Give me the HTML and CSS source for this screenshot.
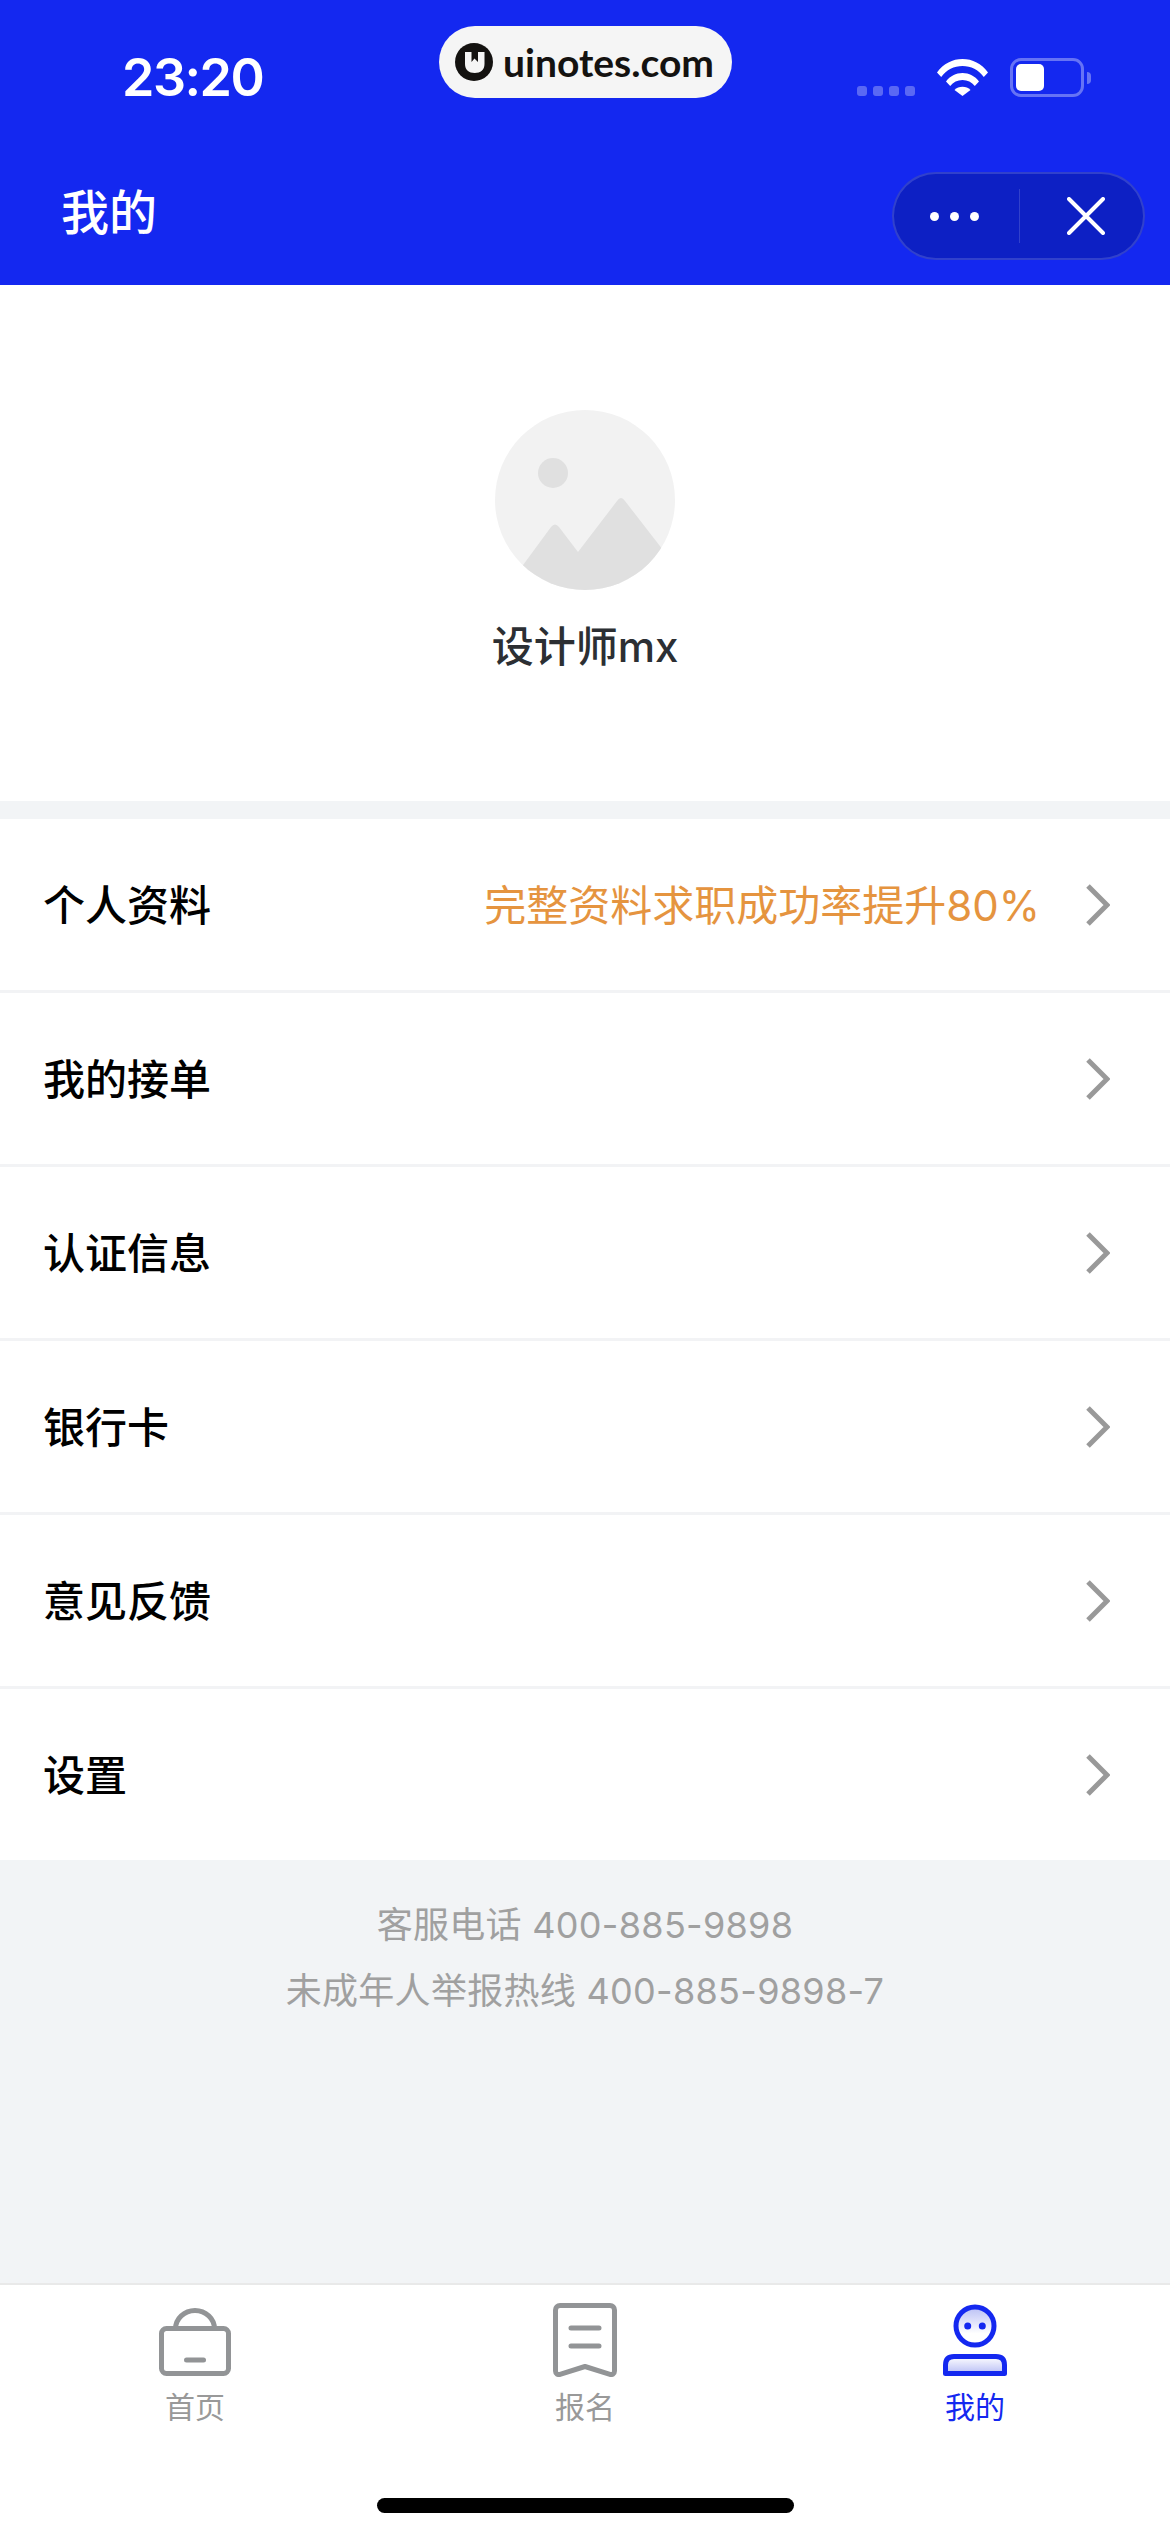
FILE: index.html
```html
<!DOCTYPE html>
<html lang="zh-CN">
<head>
    <meta charset="UTF-8">
    <meta name="viewport" content="width=device-width, initial-scale=1.0">
    <title>我的</title>
    <link rel="stylesheet" href="styles.css">
</head>
<body>
    <div class="page">
        <div class="header">
            <div class="status-bar">
                <span class="time">23:20</span>
                <div class="status-icons">
                    <div class="signal"><i></i><i></i><i></i><i></i></div>
                    <svg class="wifi" width="51" height="37" viewBox="0 0 51 37">
                        <path d="M0 13.500C6.500 4.500 15.500 0 25.500 0S44.500 4.500 51 13.500L46.800 18C41.500 10.800 34 7 25.500 7S9.500 10.800 4.200 18Z" fill="#fff"/>
                        <path d="M9 22.500C13 17 19 14 25.500 14S38 17 42 22.500L37.800 27C34.800 23 30.500 21 25.500 21S16.200 23 13.200 27Z" fill="#fff"/>
                        <path d="M17.500 31C19.500 29 22.500 27.800 25.500 27.800S31.500 29 33.500 31L25.500 37Z" fill="#fff"/>
                    </svg>
                    <div class="battery">
                        <div class="battery-body"><div class="battery-level"></div></div>
                        <div class="battery-nub"></div>
                    </div>
                </div>
            </div>
            <div class="nav-bar">
                <span class="nav-title">我的</span>
                <div class="capsule">
                    <div class="capsule-more"><i></i><i></i><i></i></div>
                    <div class="capsule-close">
                        <svg width="38" height="38" viewBox="0 0 38 38">
                            <path d="M2 2L36 36M36 2L2 36" stroke="#fff" stroke-width="4" stroke-linecap="round" fill="none"/>
                        </svg>
                    </div>
                </div>
            </div>
        </div>

        <!-- watermark on top of the status bar -->
        <div class="watermark">
            <svg width="38" height="38" viewBox="0 0 38 38">
                <circle cx="19" cy="19" r="19" fill="#141210"/>
                <path d="M10 9H16.500V19L19.500 15.500L23 19V9H29.500V21C29.500 27 25.500 30 19.750 30S10 27 10 21Z" fill="#f5f5f5"/>
            </svg>
            <span>uinotes.com</span>
        </div>

        <div class="profile">
            <svg class="avatar" width="180" height="180" viewBox="0 0 180 180">
                <defs><clipPath id="avatarClip"><circle cx="90" cy="90" r="90"/></clipPath></defs>
                <circle cx="90" cy="90" r="90" fill="#f2f2f2"/>
                <circle cx="58" cy="63" r="15" fill="#e0e0e0"/>
                <path clip-path="url(#avatarClip)" d="M20 166L56 117Q60 112 64 117L83 142L122 91Q126 85 130 91L175 149V180H20Z" fill="#e0e0e0"/>
            </svg>
            <div class="profile-name">设计师mx</div>
        </div>

        <div class="menu">
            <div class="menu-row">
                <span class="menu-label">个人资料</span>
                <span class="menu-hint">完整资料求职成功率提升80%</span>
                <svg class="chevron" width="24" height="42" viewBox="0 0 24 42"><path d="M2 2L21 21L2 40" stroke="#999" stroke-width="5" fill="none"/></svg>
            </div>
            <div class="menu-row">
                <span class="menu-label">我的接单</span>
                <svg class="chevron" width="24" height="42" viewBox="0 0 24 42"><path d="M2 2L21 21L2 40" stroke="#999" stroke-width="5" fill="none"/></svg>
            </div>
            <div class="menu-row">
                <span class="menu-label">认证信息</span>
                <svg class="chevron" width="24" height="42" viewBox="0 0 24 42"><path d="M2 2L21 21L2 40" stroke="#999" stroke-width="5" fill="none"/></svg>
            </div>
            <div class="menu-row">
                <span class="menu-label">银行卡</span>
                <svg class="chevron" width="24" height="42" viewBox="0 0 24 42"><path d="M2 2L21 21L2 40" stroke="#999" stroke-width="5" fill="none"/></svg>
            </div>
            <div class="menu-row">
                <span class="menu-label">意见反馈</span>
                <svg class="chevron" width="24" height="42" viewBox="0 0 24 42"><path d="M2 2L21 21L2 40" stroke="#999" stroke-width="5" fill="none"/></svg>
            </div>
            <div class="menu-row">
                <span class="menu-label">设置</span>
                <svg class="chevron" width="24" height="42" viewBox="0 0 24 42"><path d="M2 2L21 21L2 40" stroke="#999" stroke-width="5" fill="none"/></svg>
            </div>
        </div>

        <div class="service">
            <p>客服电话 400-885-9898</p>
            <p>未成年人举报热线 400-885-9898-7</p>
        </div>

        <div class="tab-bar">
            <div class="tabs">
                <div class="tab">
                    <svg width="72" height="74" viewBox="0 0 72 74">
                        <path d="M16.500 26A19.500 18.500 0 0 1 55.500 26" stroke="#929496" stroke-width="5" fill="none"/>
                        <rect x="2.500" y="25.500" width="67" height="45" rx="5" stroke="#929496" stroke-width="5" fill="none"/>
                        <path d="M27.500 57H44.500" stroke="#929496" stroke-width="5" stroke-linecap="round"/>
                    </svg>
                    <span>首页</span>
                </div>
                <div class="tab">
                    <svg width="64" height="74" viewBox="0 0 64 74">
                        <path d="M2.500 7C2.500 4.500 4.500 2.500 7 2.500H57C59.500 2.500 61.500 4.500 61.500 7V68C61.500 71 59 72 57 71.300L32 63.500L7 71.300C5 72 2.500 71 2.500 68Z" stroke="#929496" stroke-width="5" stroke-linejoin="round" fill="none"/>
                        <path d="M18 25H46M18 43H46" stroke="#929496" stroke-width="5" stroke-linecap="round"/>
                    </svg>
                    <span>报名</span>
                </div>
                <div class="tab tab-active">
                    <svg width="64" height="74" viewBox="0 0 64 74">
                        <defs>
                            <linearGradient id="headFill" x1="0" y1="0" x2="0" y2="1">
                                <stop offset="0" stop-color="#b9bff5"/>
                                <stop offset="0.700" stop-color="#fff"/>
                            </linearGradient>
                            <linearGradient id="bodyFill" x1="0" y1="0" x2="0" y2="1">
                                <stop offset="0" stop-color="#fff"/>
                                <stop offset="1" stop-color="#b9bff5"/>
                            </linearGradient>
                        </defs>
                        <circle cx="32" cy="23" r="19" fill="url(#headFill)" stroke="#1428f0" stroke-width="5"/>
                        <circle cx="24.700" cy="23" r="3.500" fill="#1428f0"/>
                        <circle cx="39.300" cy="23" r="3.500" fill="#1428f0"/>
                        <path d="M2.500 70.500V62C2.500 56 6 53.500 11 53.500H53C58 53.500 61.500 56 61.500 62V70.500Z" fill="url(#bodyFill)" stroke="#1428f0" stroke-width="5" stroke-linejoin="round"/>
                    </svg>
                    <span>我的</span>
                </div>
            </div>
            <div class="home-indicator"></div>
        </div>
    </div>
</body>
</html>
```

FILE: styles.css
```css
* {
    box-sizing: border-box;
}

body {
    margin: 0;
    background-color: #f2f4f6;
    font-family: Inter, "Noto Sans CJK SC", sans-serif;
}

.page {
    position: relative;
    display: flex;
    flex-direction: column;
    width: 1170px;
    height: 2532px;
    overflow: hidden;
}

/* header */
.header {
    height: 285px;
    background-color: #1428f0;
    color: #fff;
}

.status-bar {
    display: flex;
    justify-content: space-between;
    height: 172px;
    padding: 50px 79px 0 122px;
}

.time {
    font-size: 52px;
    line-height: 56px;
    font-weight: 600;
    letter-spacing: -1.500px;
}

.status-icons {
    display: flex;
    align-items: flex-start;
    padding-top: 8px;
}

.signal {
    display: flex;
    gap: 6px;
    margin-top: 28px;
    margin-right: 22px;
}

.signal i {
    width: 10px;
    height: 10px;
    border-radius: 3px;
    background-color: rgba(255, 255, 255, 0.3);
}

.wifi {
    margin-top: 1px;
    margin-right: 22px;
}

.battery {
    display: flex;
    align-items: center;
}

.battery-body {
    width: 74px;
    height: 39px;
    padding: 3px;
    border: 3px solid rgba(255, 255, 255, 0.35);
    border-radius: 11px;
}

.battery-level {
    width: 28px;
    height: 27px;
    border-radius: 5px;
    background-color: #fff;
}

.battery-nub {
    width: 4px;
    height: 12px;
    margin-left: 3px;
    border-radius: 0 6px 6px 0;
    background-color: rgba(255, 255, 255, 0.35);
}

.nav-bar {
    display: flex;
    justify-content: space-between;
    align-items: center;
    height: 88px;
    padding: 0 25px 0 61px;
}

.nav-title {
    margin-bottom: 14px;
    font-size: 48px;
    font-weight: 500;
}

.capsule {
    display: flex;
    align-items: center;
    width: 253px;
    height: 88px;
    border: 2px solid rgba(255, 255, 255, 0.15);
    border-radius: 44px;
    background-color: #0d20c4;
}

.capsule-more {
    display: flex;
    justify-content: center;
    align-items: center;
    gap: 11px;
    width: 126px;
    height: 54px;
    padding-right: 4px;
    border-right: 1px solid rgba(255, 255, 255, 0.15);
}

.capsule-more i {
    width: 9px;
    height: 9px;
    border-radius: 50%;
    background-color: #fff;
}

.capsule-close {
    display: flex;
    flex: 1;
    justify-content: center;
    padding-left: 8px;
}

.watermark {
    position: absolute;
    top: 26px;
    left: 439px;
    display: flex;
    align-items: center;
    gap: 10px;
    width: 293px;
    height: 72px;
    padding-left: 16px;
    border-radius: 36px;
    background-color: #f5f5f5;
    color: #141210;
    font-family: Lato, sans-serif;
    font-size: 39px;
    font-weight: 700;
}

/* profile */
.profile {
    display: flex;
    flex-direction: column;
    align-items: center;
    height: 516px;
    padding-top: 125px;
    background-color: #fff;
}

.profile-name {
    margin-top: 27px;
    color: #2c2f33;
    font-size: 42px;
    font-weight: 500;
    line-height: 60px;
}

/* menu */
.menu {
    margin-top: 18px;
    background-color: #fff;
}

.menu-row {
    display: flex;
    align-items: center;
    height: 174px;
    padding: 0 60px 0 43px;
    border-bottom: 3px solid #f2f3f5;
}

.menu-row:last-child {
    height: 171px;
    border-bottom: none;
}

.menu-label {
    flex: 1;
    margin-bottom: 5px;
    color: #000;
    font-size: 42px;
    font-weight: 500;
}

.menu-hint {
    margin-right: 46px;
    margin-bottom: 5px;
    color: #e5943f;
    font-size: 42px;
}

/* service phone numbers */
.service {
    flex: 1;
    padding-top: 32px;
    color: #a0a0a0;
    font-size: 36px;
    letter-spacing: 0.3px;
    line-height: 66px;
    text-align: center;
}

.service p {
    margin: 0;
}

/* tab bar */
.tab-bar {
    height: 249px;
    border-top: 2px solid #e9e9e9;
    background-color: #fff;
}

.tabs {
    display: flex;
    padding-top: 18px;
}

.tab {
    display: flex;
    flex: 1;
    flex-direction: column;
    align-items: center;
    color: #999;
    font-size: 30px;
    line-height: 40px;
}

.tab span {
    margin-top: 10px;
}

.tab-active {
    color: #1428f0;
}

.home-indicator {
    width: 417px;
    height: 15px;
    margin: 71px auto 0;
    border-radius: 8px;
    background-color: #000;
}
```
